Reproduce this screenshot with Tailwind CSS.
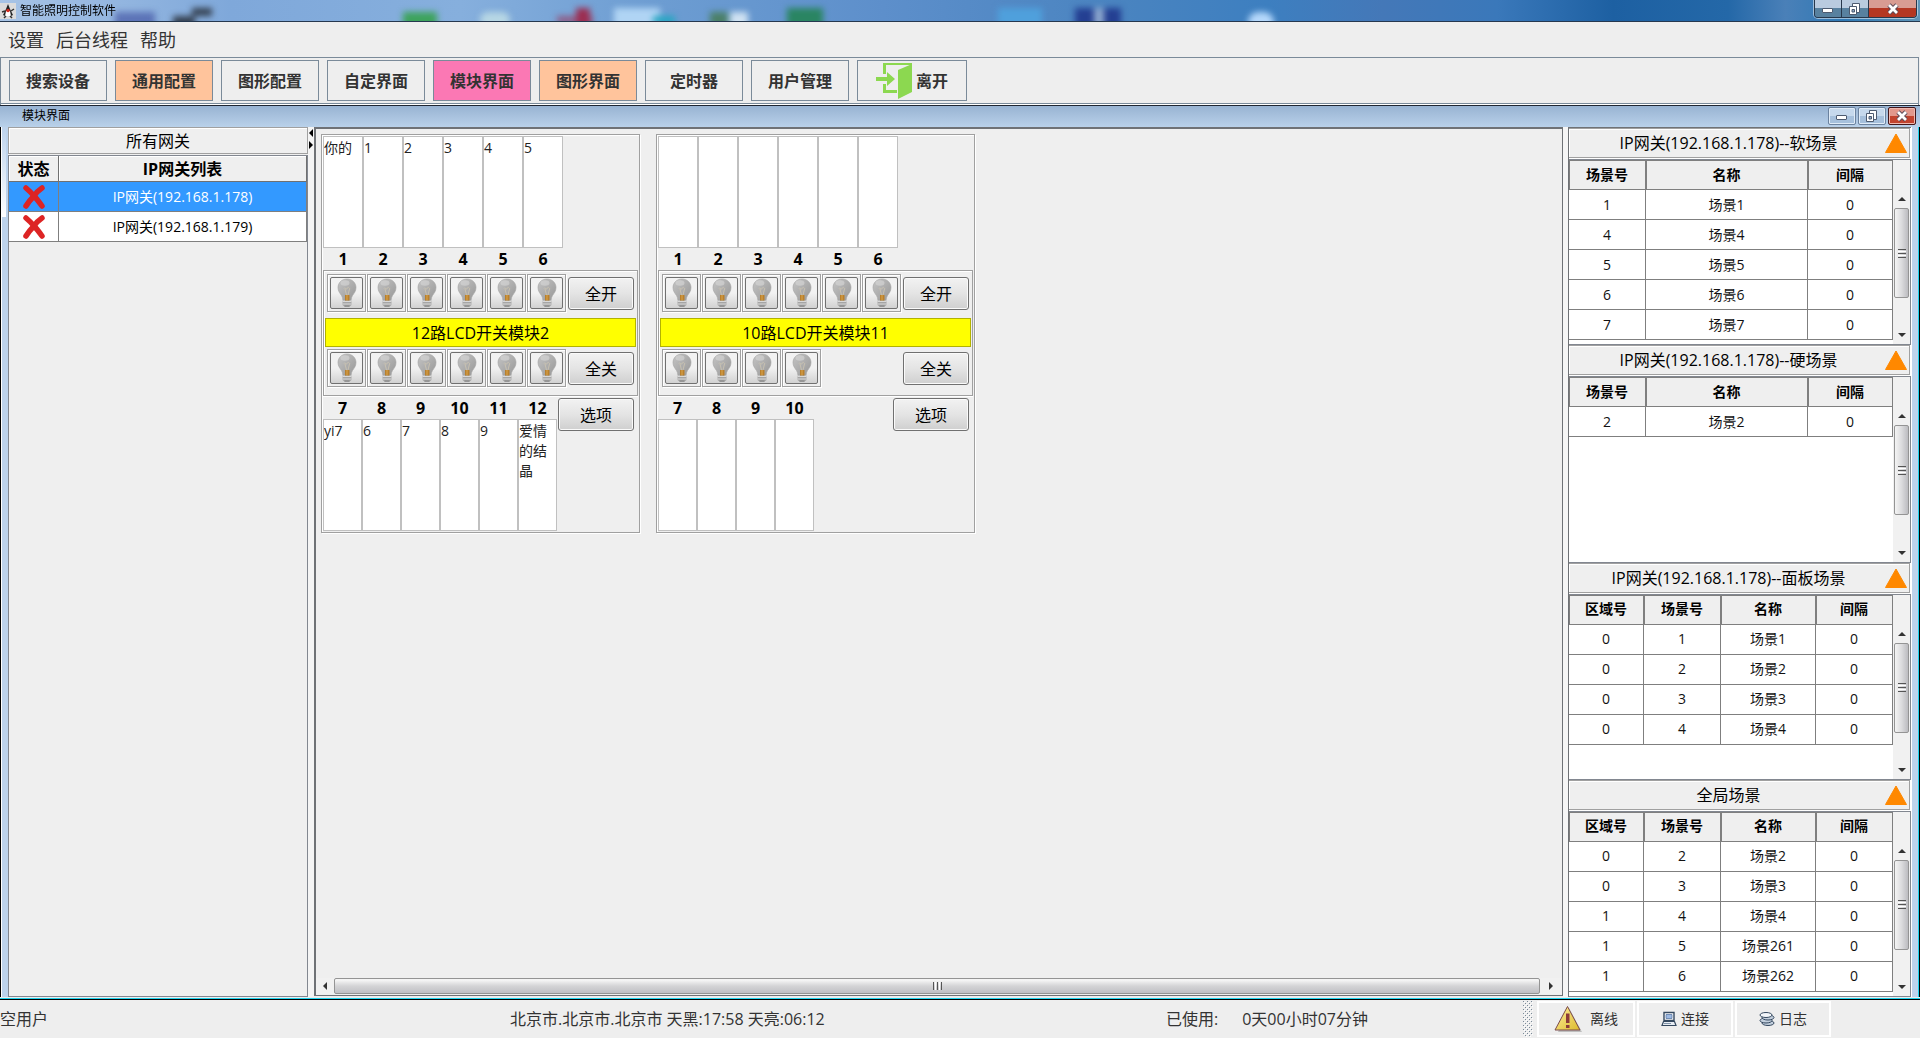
<!DOCTYPE html>
<html lang="zh-CN">
<head>
    <meta charset="UTF-8">
    <meta name="viewport" content="width=device-width, initial-scale=1.0">
    <title>智能照明控制软件</title>
    <script src="https://cdn.jsdelivr.net/npm/@tailwindcss/browser@4"></script>
</head>
<body class="h-screen min-h-[1000px] flex flex-col bg-[#eeeeee] text-black overflow-hidden font-['Open_Sans','Noto_Sans_CJK_SC',sans-serif]">
    <!-- Iconos compartidos -->
    <svg class="absolute size-0" aria-hidden="true">
        <defs>
            <linearGradient id="glass" x1="0" y1="0" x2="1" y2="1">
                <stop offset="0" stop-color="#c4c4c4"/>
                <stop offset="1" stop-color="#989898"/>
            </linearGradient>
            <linearGradient id="yellow" x1="0" y1="0" x2="1" y2="1">
                <stop offset="0" stop-color="#fff0a0"/>
                <stop offset="1" stop-color="#dcb92c"/>
            </linearGradient>
            <symbol id="bulb" viewBox="0 0 20 30">
                <path d="M10 1C4.8 1 1 4.8 1 9.6c0 3.600 2 5.800 3.500 8 .8 1.200 1.300 2.700 1.400 4.400h8.200c.1-1.700.6-3.200 1.400-4.400 1.500-2.200 3.500-4.400 3.500-8C19 4.800 15.200 1 10 1z" fill="url(#glass)" stroke="#a2a2a2" stroke-width=".6"/>
                <ellipse cx="8" cy="5" rx="4.500" ry="2.800" fill="#d3d3d3" opacity=".7"/>
                <path d="M7 10.500c1-2 2 2 3 0s2-1 3 .5M8 11l1.500 6M12.500 11L11 17" fill="none" stroke="#cfc6b2" stroke-width=".8"/>
                <rect x="8" y="17" width="4.500" height="6.500" fill="#b9802c"/>
                <rect x="9.500" y="17" width="1" height="6.500" fill="#dca64e"/>
                <path d="M5.500 22.500h9v4.500l-2.500 2H8l-2.500-2z" fill="#a5a5a5"/>
                <path d="M5.500 23.500h9M5.500 26h9" stroke="#d9d9d9" stroke-width="1"/>
                <path d="M7.500 28h5" stroke="#8c8c8c" stroke-width="1.200"/>
            </symbol>
            <symbol id="cross" viewBox="0 0 24 24">
                <path d="M4 3C7 5.500 9.500 8 12 11 14 8 17 5 20 3M4 21c2.500-4 5-7 8-10 3 3 5.500 6.500 8 10" fill="none" stroke="#dd2424" stroke-width="5.500" stroke-linecap="round" stroke-linejoin="round"/>
            </symbol>
            <symbol id="winMin" viewBox="0 0 14 14">
                <rect x="1.500" y="6.500" width="10" height="4" rx=".5" fill="#fff" stroke="#4d5b70"/>
            </symbol>
            <symbol id="winMax" viewBox="0 0 14 14">
                <path d="M4.500 1.500h7v9h-7z" fill="#fff" stroke="#4d5b70"/>
                <path d="M1.500 4.500h7v8h-7z" fill="#fff" stroke="#4d5b70"/>
                <path d="M4 7.500h2.500v2.500H4z" fill="#8fa7c4" stroke="#4d5b70"/>
            </symbol>
            <symbol id="winClose" viewBox="0 0 14 14">
                <path d="M3 3l8 8M11 3l-8 8" stroke="#5c4a58" stroke-width="4.600"/>
                <path d="M3 3l8 8M11 3l-8 8" stroke="#fff" stroke-width="2.800"/>
            </symbol>
        </defs>
    </svg>

    <!-- Barra de título -->
    <header class="relative h-[22px] shrink-0 flex items-start justify-between overflow-hidden border-b border-[#26384f] bg-[linear-gradient(to_right,#a8c4e6_0%,#7fa8da_12%,#86afdd_24%,#6d9dd2_34%,#5d8fcb_46%,#4a84c0_58%,#3d7fc0_66%,#4478b8_72%,#3a78ba_78%,#1d60a2_84%,#2468a8_90%,#4a80b8_93%,#2f79b5_96%,#5f95b8_100%)]">
        <div class="absolute inset-0 blur-[3px]">
            <div class="absolute left-[6%] top-3 w-[40px] h-4 bg-[#3b4a9c]/60"></div>
            <div class="absolute left-[10%] top-2 w-[20px] h-2 bg-[#20262e]/80"></div>
            <div class="absolute left-[9%] top-4 w-[22px] h-3 bg-[#20262e]/80"></div>
            <div class="absolute left-[21%] top-3 w-[34px] h-4 bg-[#3da35c]"></div>
            <div class="absolute left-[25%] top-3 w-[30px] h-4 rounded-full bg-[#b6d6e4]"></div>
            <div class="absolute left-[30%] top-2 w-[14px] h-5 bg-[#9c2d51]"></div>
            <div class="absolute left-[29%] top-4 w-[36px] h-2 bg-[#9c2d51]/60"></div>
            <div class="absolute left-[32%] top-2 w-[46px] h-5 bg-[#b0d4f4]"></div>
            <div class="absolute left-[34%] top-4 w-[22px] h-2 bg-[#25a6c2]"></div>
            <div class="absolute left-[37%] top-3 w-[18px] h-4 bg-[#4b8068]"></div>
            <div class="absolute left-[38%] top-3 w-[18px] h-4 bg-[#cfe2f2]"></div>
            <div class="absolute left-[41%] top-2 w-[36px] h-5 bg-[#2a8562]"></div>
            <div class="absolute left-[52%] top-2 w-[44px] h-5 bg-[#4fa0dc]"></div>
            <div class="absolute left-[56%] top-2 w-[46px] h-5 bg-[#243f92]"></div>
            <div class="absolute left-[57%] top-2 w-[10px] h-5 bg-[#8ea9cf]"></div>
            <div class="absolute left-[65%] top-3 w-[26px] h-5 rounded-full bg-[#b5d8fb]"></div>
        </div>
        <div class="relative flex items-center gap-1 pt-[2px]">
            <svg class="size-4" viewBox="0 0 16 16">
                <path d="M0 0h16v16H0z" fill="#dcdcdc"/>
                <path d="M8 1l2 5 3 6-2 1H5l-2-1 3-6z" fill="#222"/>
                <path d="M6 8h4l1 5H5z" fill="#fff"/>
                <circle cx="8" cy="7.500" r="1.800" fill="#d52a1e"/>
                <path d="M2 9l3-1M14 6l-3 2M4 15l2-2M12 15l-2-2" stroke="#333" stroke-width="1.500"/>
            </svg>
            <h1 class="text-xs leading-[18px] whitespace-nowrap">智能照明控制软件</h1>
        </div>
        <div class="relative flex h-[18px] mr-[3px] rounded-b-sm border border-t-0 border-[#27384c] overflow-hidden shadow-[0_0_0_1px_#ffffff80]">
            <button aria-label="最小化" class="w-[27px] flex justify-center items-center border-r border-[#27384c] bg-linear-to-b from-[#b9cbdf] from-50% to-[#58819f] to-50%"><svg class="size-3.5"><use href="#winMin"/></svg></button>
            <button aria-label="还原" class="w-[27px] flex justify-center items-center border-r border-[#27384c] bg-linear-to-b from-[#b9cbdf] from-50% to-[#58819f] to-50%"><svg class="size-3.5"><use href="#winMax"/></svg></button>
            <button aria-label="关闭" class="w-[47px] flex justify-center items-center bg-linear-to-b from-[#d89c92] from-50% to-[#b43722] to-50%"><svg class="size-3.5"><use href="#winClose"/></svg></button>
        </div>
    </header>

    <!-- Menú -->
    <nav class="h-[35px] shrink-0 flex items-center gap-3 pl-2 text-[18px] leading-6 text-[#333333]">
        <button>设置</button>
        <button>后台线程</button>
        <button>帮助</button>
    </nav>

    <!-- Barra de herramientas -->
    <div class="h-[48px] shrink-0 mr-px border border-[#7a8a99] border-b-0 shadow-[inset_0_-1px_0_#fff,inset_0_-2px_0_#7a8a99] flex items-start gap-2 pt-[2px] pl-2 text-base leading-6 font-bold text-[#333333]">
        <button class="w-[98px] h-[41px] border border-[#7a8a99]">搜索设备</button>
        <button class="w-[98px] h-[41px] border border-[#7a8a99] bg-[#ffc49c]">通用配置</button>
        <button class="w-[98px] h-[41px] border border-[#7a8a99]">图形配置</button>
        <button class="w-[98px] h-[41px] border border-[#7a8a99]">自定界面</button>
        <button class="w-[98px] h-[41px] border border-[#7a8a99] bg-[#fb78b4]">模块界面</button>
        <button class="w-[98px] h-[41px] border border-[#7a8a99] bg-[#ffc49c]">图形界面</button>
        <button class="w-[98px] h-[41px] border border-[#7a8a99]">定时器</button>
        <button class="w-[98px] h-[41px] border border-[#7a8a99]">用户管理</button>
        <button class="w-[110px] h-[41px] border border-[#7a8a99] flex items-center justify-center gap-1">
            <svg class="size-9" viewBox="0 0 36 36" fill="#8cd850">
                <path d="M7 0h29v2H10v9H7z"/>
                <path d="M22 7l14-6v28l-14 7z"/>
                <path d="M7 21h3v6h11v3H7z"/>
                <path d="M0 14h11V9l8 7-8 7v-5H0z"/>
            </svg>
            离开
        </button>
    </div>

    <!-- Ventana interna -->
    <div class="h-[22px] shrink-0 flex items-start justify-between border-t border-[#1f2530] bg-linear-to-b from-[#98b3d2] to-[#b9d1ea] pl-[22px] pr-1 pt-px">
        <h2 class="text-xs leading-[18px]">模块界面</h2>
        <div class="flex gap-[2px] h-[18px]">
            <button aria-label="最小化窗口" class="w-7 flex justify-center items-center rounded-xs border border-[#6b829f] bg-linear-to-b from-[#c6d9ed] from-50% to-[#a6c0dc] to-50% shadow-[inset_0_0_0_1px_#e0ecf8]"><svg class="size-3.5"><use href="#winMin"/></svg></button>
            <button aria-label="还原窗口" class="w-7 flex justify-center items-center rounded-xs border border-[#6b829f] bg-linear-to-b from-[#c6d9ed] from-50% to-[#a6c0dc] to-50% shadow-[inset_0_0_0_1px_#e0ecf8]"><svg class="size-3.5"><use href="#winMax"/></svg></button>
            <button aria-label="关闭窗口" class="w-7 flex justify-center items-center rounded-xs border border-[#43161a] bg-linear-to-b from-[#e2988c] from-50% to-[#c2432e] to-50% shadow-[inset_0_0_0_1px_#f0b8ae]"><svg class="size-3.5"><use href="#winClose"/></svg></button>
        </div>
    </div>

    <main class="flex-1 min-h-0 flex pb-[2px] border-b border-black shadow-[inset_0_-1px_0_#1fd3ee]">
        <div class="w-2 shrink-0 border-l border-black bg-[#bdd3ec] shadow-[inset_1px_0_0_#fff]">
            <div class="h-[90px] ml-px w-1 bg-linear-to-b from-[#bdd3ec] to-white"></div>
        </div>

        <!-- Lista de gateways -->
        <section class="w-[300px] shrink-0 flex flex-col bg-[#efefef]">
            <h3 class="h-[27px] shrink-0 border border-[#a0a0a0] shadow-[inset_1px_1px_0_#fff] text-center text-base leading-[26px]">所有网关</h3>
            <div class="flex-1 mt-px border border-[#828790]">
                <table class="w-full table-fixed border-separate border-spacing-0">
                    <colgroup><col class="w-[50px]"><col></colgroup>
                    <thead>
                        <tr class="h-[26px] text-base leading-6">
                            <th class="p-0 bg-[#efefef] border-r border-b border-[#707070] shadow-[inset_1px_1px_0_#fff]">状态</th>
                            <th class="p-0 bg-[#efefef] border-r border-b border-[#707070] shadow-[inset_1px_1px_0_#fff]">IP网关列表</th>
                        </tr>
                    </thead>
                    <tbody class="text-sm leading-5 text-center">
                        <tr class="h-[30px] bg-[#3399ff] text-white">
                            <td class="p-0 border-r border-b border-[#7f7f7f]"><svg class="size-6 mx-auto" role="img" aria-label="离线"><use href="#cross"/></svg></td>
                            <td class="p-0 border-r border-b border-[#7f7f7f]">IP网关(192.168.1.178)</td>
                        </tr>
                        <tr class="h-[30px] bg-white">
                            <td class="p-0 border-r border-b border-[#7f7f7f]"><svg class="size-6 mx-auto" role="img" aria-label="离线"><use href="#cross"/></svg></td>
                            <td class="p-0 border-r border-b border-[#7f7f7f]">IP网关(192.168.1.179)</td>
                        </tr>
                    </tbody>
                </table>
            </div>
        </section>

        <div class="w-[6px] shrink-0 bg-[#f4f4f4] flex flex-col items-center pt-[2px] gap-1">
            <svg class="w-1 h-2" viewBox="0 0 4 8"><path d="M4 0v8L0 4z"/></svg>
            <svg class="w-1 h-2" viewBox="0 0 4 8"><path d="M0 0v8l4-4z"/></svg>
        </div>

        <!-- Módulos -->
        <section class="flex-1 min-w-0 mb-px flex flex-col border-2 border-r border-b border-[#6f7276] bg-[#efefef]">
            <div id="modules" class="flex-1 flex items-start gap-4 pt-[5px] pl-[5px]"></div>
            <div class="h-4 mb-px flex bg-[#f1f1f1]">
                <div class="w-[18px] flex items-center justify-center"><svg class="w-1 h-2" viewBox="0 0 4 8"><path d="M4 0v8L0 4z" fill="#333"/></svg></div>
                <div class="flex-1 rounded-xs border border-[#949494] bg-linear-to-b from-[#f4f4f4] from-10% via-[#d4d4d6] via-50% to-[#c0c0c4] flex items-center justify-center gap-px">
                    <i class="w-px h-2 bg-[#555]"></i><i class="w-px h-2 bg-white"></i><i class="w-px h-2 bg-[#555]"></i><i class="w-px h-2 bg-white"></i><i class="w-px h-2 bg-[#555]"></i>
                </div>
                <div class="w-[22px] flex items-center justify-center"><svg class="w-1 h-2" viewBox="0 0 4 8"><path d="M0 0v8l4-4z" fill="#333"/></svg></div>
            </div>
        </section>

        <div class="w-[5px] shrink-0 bg-[#f6f6f6]"></div>

        <!-- Escenas -->
        <aside id="scenes" class="w-[343px] shrink-0 flex flex-col border-t border-l border-[#6f7276] bg-white"></aside>

        <div class="w-[9px] shrink-0 bg-[#bdd3ec] border-r border-black shadow-[inset_-1px_0_0_#1fd3ee,inset_1px_0_0_#fff]"></div>
    </main>

    <!-- Barra de estado -->
    <footer class="h-[38px] shrink-0 grid grid-cols-[510fr_656fr_357fr_397px] items-center text-base leading-6 text-[#333333] whitespace-nowrap">
        <span>空用户</span>
        <span>北京市.北京市.北京市 天黑:17:58 天亮:06:12</span>
        <span class="flex gap-6"><span>已使用:</span><span>0天00小时07分钟</span></span>
        <div class="flex h-full items-center gap-[2px] text-sm">
            <svg class="w-[10px] h-9">
                <defs><pattern id="grip" width="4" height="4" patternUnits="userSpaceOnUse"><path d="M0 0h1v1H0zM2 2h1v1H2z" fill="#7a8a99"/><path d="M1 1h1v1H1zM3 3h1v1H3z" fill="#fff"/></pattern></defs>
                <rect width="10" height="36" fill="url(#grip)"/>
            </svg>
            <button class="w-[98px] h-9 ml-[2px] border-2 border-white flex items-center justify-center gap-2">
                <svg class="w-7 h-7" viewBox="0 0 28 28">
                    <path d="M15 3l13 24H4z" fill="#000" opacity=".2"/>
                    <path d="M13.500 1.500L26 25H1z" fill="url(#yellow)" stroke="#7b4a4a"/>
                    <path d="M12 8.500h3.500v9.500H12zM12 20h3.500v3H12z" fill="#8b3a3a"/>
                </svg>
                离线
            </button>
            <button class="w-24 h-9 border-2 border-white flex items-center justify-center gap-1">
                <svg class="size-4" viewBox="0 0 16 16">
                    <path d="M3 1.500h10v8H3z" fill="#fff" stroke="#34485f" stroke-width="1.400"/>
                    <path d="M5 3.500h6v4H5z" fill="#9db9e3" stroke="#5b78a5" stroke-width=".8"/>
                    <path d="M2.500 10.500h11l1.500 4H1z" fill="#e8edf4" stroke="#34485f" stroke-width="1.200"/>
                    <path d="M3 12.500h7" stroke="#8093a8"/>
                </svg>
                连接
            </button>
            <button class="w-24 h-9 border-2 border-white flex items-center justify-center gap-1">
                <svg class="size-4" viewBox="0 0 16 16" fill="#c3cfdd" stroke="#34485f">
                    <ellipse cx="9" cy="12" rx="6" ry="2.500"/>
                    <ellipse cx="7" cy="9.500" rx="6" ry="2.500"/>
                    <ellipse cx="9" cy="6.500" rx="6" ry="2.500"/>
                    <ellipse cx="7" cy="4" rx="6" ry="2.500" fill="#f2f5f9"/>
                </svg>
                日志
            </button>
        </div>
    </footer>

    <script>
        const modules = [
            { name: '12路LCD开关模块2', top: ['你的', '1', '2', '3', '4', '5'], bottom: ['yi7', '6', '7', '8', '9', '爱情的结晶'] },
            { name: '10路LCD开关模块11', top: ['', '', '', '', '', ''], bottom: ['', '', '', ''] }
        ];

        const three = ['场景号', '名称', '间隔'];
        const four = ['区域号', '场景号', '名称', '间隔'];
        const scenes = [
            { title: 'IP网关(192.168.1.178)--软场景', head: three, rows: [[1, '场景1', 0], [4, '场景4', 0], [5, '场景5', 0], [6, '场景6', 0], [7, '场景7', 0]] },
            { title: 'IP网关(192.168.1.178)--硬场景', head: three, rows: [[2, '场景2', 0]] },
            { title: 'IP网关(192.168.1.178)--面板场景', head: four, rows: [[0, 1, '场景1', 0], [0, 2, '场景2', 0], [0, 3, '场景3', 0], [0, 4, '场景4', 0]] },
            { title: '全局场景', head: four, rows: [[0, 2, '场景2', 0], [0, 3, '场景3', 0], [1, 4, '场景4', 0], [1, 5, '场景261', 0], [1, 6, '场景262', 0]] }
        ];

        const cols3 = '<col class="w-[77px]"><col><col class="w-[85px]">';
        const cols4 = '<col class="w-[75px]"><col class="w-[77px]"><col><col class="w-[77px]">';

        const bulb = n => `
            <div class="w-[39px] h-[38px] border border-[#a0a0a0] p-[2px] shadow-[inset_1px_1px_0_#fff,1px_1px_0_#fff]">
                <button aria-label="开关${n}" class="w-full h-full rounded-xs border border-[#707070] bg-linear-to-b from-[#f2f2f2] from-50% to-[#d2d2d2] flex items-center justify-center"><svg class="w-5 h-[30px]"><use href="#bulb"/></svg></button>
            </div>`;

        const textButton = (label, width) => `
            <button class="${width} h-[33px] rounded-[3px] border border-[#707070] shadow-[inset_0_0_0_1px_#fafafa] bg-linear-to-b from-[#f2f2f2] via-[#e4e4e4] via-50% to-[#cfcfcf] text-base leading-6">${label}</button>`;

        const box = (text, n) => `<textarea aria-label="回路${n}" class="block w-full h-[112px] resize-none overflow-hidden border border-[#c0c0c0] bg-white pt-px text-sm leading-5 text-[#222222]">${text}</textarea>`;

        document.getElementById('modules').innerHTML = modules.map(m => `
            <article class="w-[319px] border border-[#a0a0a0] p-px shadow-[inset_1px_1px_0_#fff,1px_1px_0_#fff]">
                <div class="flex">
                    ${m.top.map((t, i) => `<div class="w-10">${box(t, i + 1)}<div class="h-[22px] text-center text-base leading-[22px] font-bold">${i + 1}</div></div>`).join('')}
                </div>
                <div class="h-[126px] border border-[#a0a0a0] pt-[3px] shadow-[inset_1px_1px_0_#fff,0_1px_0_#fff]">
                    <div class="flex gap-px pl-[3px] pr-[3px]">
                        ${m.top.map((t, i) => bulb(i + 1)).join('')}
                        <div class="ml-auto pt-[3px]">${textButton('全开', 'w-[66px]')}</div>
                    </div>
                    <div class="h-[29px] mx-px mt-[6px] mb-[2px] border border-[#b2b200] bg-[#ffff00] text-center text-base leading-[28px]">${m.name}</div>
                    <div class="flex gap-px pl-[3px] pr-[3px]">
                        ${m.bottom.map((t, i) => bulb(i + 7)).join('')}
                        <div class="ml-auto pt-[3px]">${textButton('全关', 'w-[66px]')}</div>
                    </div>
                </div>
                <div class="flex items-start">
                    ${m.bottom.map((t, i) => `<div class="w-[39px]"><div class="h-[23px] text-center text-base leading-6 font-bold">${i + 7}</div>${box(t, i + 7)}</div>`).join('')}
                    <div class="ml-auto pt-[2px] pr-1">${textButton('选项', 'w-[76px]')}</div>
                </div>
            </article>`).join('');

        document.getElementById('scenes').innerHTML = scenes.map(s => `
            <section class="flex-1 flex flex-col min-h-0">
                <h3 class="h-[30px] shrink-0 mr-px mb-px flex items-center border border-l-0 border-[#a0a0a0] shadow-[inset_1px_1px_0_#fff] bg-[#efefef] text-base leading-6">
                    <span class="flex-1 text-center pl-1">${s.title}</span>
                    <button aria-label="折叠" class="mr-px"><svg class="w-6 h-[22px]" viewBox="0 0 24 22"><path d="M12 2l10.500 18.500h-21z" fill="#ff8800" stroke="#ff8800" stroke-linejoin="round"/></svg></button>
                </h3>
                <div class="flex-1 min-h-0 flex border border-[#828790] border-l-0">
                    <div class="flex-1 overflow-hidden">
                        <table class="w-full table-fixed border-separate border-spacing-0 text-sm leading-5 text-center">
                            <colgroup>${s.head.length === 3 ? cols3 : cols4}</colgroup>
                            <thead><tr class="h-[30px]">${s.head.map(h => `<th class="p-0 bg-[#efefef] border-r border-b border-[#7f7f7f] shadow-[inset_1px_1px_0_#7f7f7f]">${h}</th>`).join('')}</tr></thead>
                            <tbody>${s.rows.map(r => `<tr class="h-[30px]">${r.map(c => `<td class="p-0 border-r border-b border-[#7f7f7f] text-[#111111]">${c}</td>`).join('')}</tr>`).join('')}</tbody>
                        </table>
                    </div>
                    <div class="w-[17px] flex flex-col pt-[30px] bg-[#f1f1f1]">
                        <div class="h-[18px] flex items-center justify-center"><svg class="w-2 h-1" viewBox="0 0 8 4"><path d="M0 4h8L4 0z" fill="#333"/></svg></div>
                        <div class="h-[90px] mx-px rounded-xs border border-[#949494] bg-linear-to-r from-[#f4f4f4] via-[#dcdcde] via-50% to-[#bcbcc0] flex flex-col items-center justify-center gap-px">
                            <i class="h-px w-2 bg-[#555]"></i><i class="h-px w-2 bg-white"></i><i class="h-px w-2 bg-[#555]"></i><i class="h-px w-2 bg-white"></i><i class="h-px w-2 bg-[#555]"></i>
                        </div>
                        <div class="h-[18px] mt-auto flex items-center justify-center"><svg class="w-2 h-1" viewBox="0 0 8 4"><path d="M0 0h8L4 4z" fill="#333"/></svg></div>
                    </div>
                </div>
            </section>`).join('');
    </script>
</body>
</html>
